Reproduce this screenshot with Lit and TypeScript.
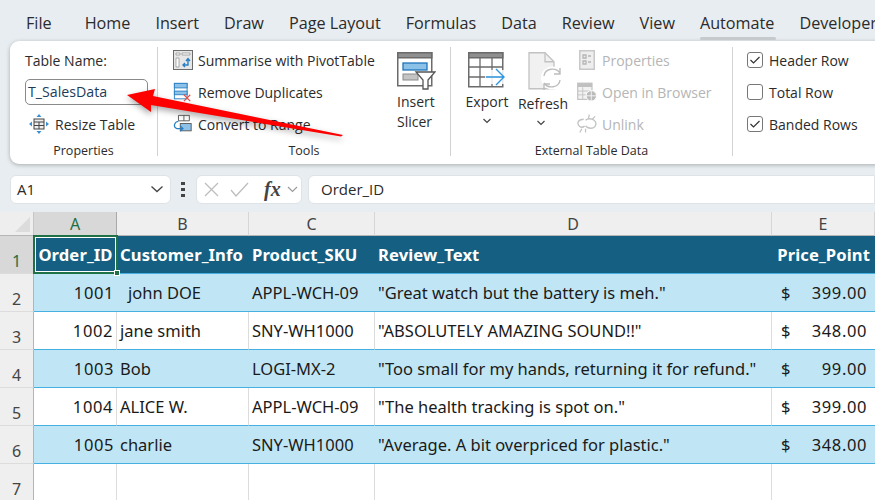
import { LitElement, html, css, svg } from "lit";
import { customElement } from "lit/decorators.js";

const tabs = ["Home", "Insert", "Draw", "Page Layout", "Formulas", "Data", "Review", "View", "Automate", "Developer"];

const rows = [
  { id: "1001", name: "john DOE", sku: "APPL-WCH-09", review: '"Great watch but the battery is meh."', price: "399.00", pad: true },
  { id: "1002", name: "jane smith", sku: "SNY-WH1000", review: '"ABSOLUTELY AMAZING SOUND!!"', price: "348.00" },
  { id: "1003", name: "Bob", sku: "LOGI-MX-2", review: '"Too small for my hands, returning it for refund."', price: "99.00" },
  { id: "1004", name: "ALICE W.", sku: "APPL-WCH-09", review: '"The health tracking is spot on."', price: "399.00" },
  { id: "1005", name: "charlie", sku: "SNY-WH1000", review: '"Average. A bit overpriced for plastic."', price: "348.00" },
];

const icon = (w: number, h: number, body: unknown) =>
  html`<svg width=${w} height=${h} viewBox="0 0 ${w} ${h}" fill="none">${body}</svg>`;

const pivotIcon = icon(20, 20, svg`
  <rect x=".5" y=".5" width="19" height="19" fill="#e6e6e6" stroke="#6b6b6b"/>
  <path d="M3 3h4v2H3zM9 3h8v2H9zM3 8h3v9H3z" fill="#fff" stroke="#8a8a8a" stroke-width=".7"/>
  <path d="M10 15h5v-6M13 11l2-2.500 2 2.500M12 13l-2 2 2 2" stroke="#2a7fc4" stroke-width="1.400"/>`);
const dupIcon = icon(22, 22, svg`
  <rect x="1.500" y="1.500" width="14" height="17" fill="#fff" stroke="#2a7fc4"/>
  <rect x="1.500" y="1.500" width="14" height="5" fill="#8cc1e8" stroke="#2a7fc4"/>
  <rect x="1.500" y="10" width="14" height="4" fill="#8cc1e8" stroke="#2a7fc4"/>
  <path d="M12 14l7 7M19 14l-7 7" stroke="#e0524c" stroke-width="1.300"/>`);
const convertIcon = icon(22, 22, svg`
  <path d="M6 1.500h12v6H6zM12 1.500v6" fill="#fff" stroke="#555"/>
  <rect x="8" y="10.500" width="12" height="8" fill="#8cc1e8" stroke="#555"/>
  <path d="M6 8C1 9 0 14 4 16h7M8 13l3 3-3 3" stroke="#2a7fc4" stroke-width="1.300"/>`);
const resizeIcon = icon(20, 20, svg`
  <rect x="5" y="5" width="10" height="10" fill="#eee" stroke="#444"/>
  <path d="M5 8h10M5 11.500h10M10 8v7" stroke="#444"/>
  <path d="M10 0l2.500 3h-5zM10 20l2.500-3h-5zM0 10l3-2.500v5zM20 10l-3-2.500v5z" fill="#3d8fcf"/>`);
const slicerIcon = icon(39, 38, svg`
  <rect x=".75" y=".75" width="34" height="33" fill="#fff" stroke="#6b6b6b" stroke-width="1.500"/>
  <rect x=".75" y=".75" width="34" height="5" fill="#8f8f8f" stroke="#6b6b6b" stroke-width="1.500"/>
  <rect x="6" y="11" width="24" height="7" fill="#8cc1e8" stroke="#1f75bb" stroke-width="1.300"/>
  <rect x="6" y="22" width="15" height="6" fill="#c4c4c4" stroke="#8a8a8a"/>
  <path d="M19 20h19l-7 8v9h-5v-9z" fill="#fff" stroke="#555" stroke-width="1.300"/>`);
const exportIcon = icon(38, 37, svg`
  <rect x=".75" y=".75" width="34" height="34" fill="#fff" stroke="#6b6b6b" stroke-width="1.500"/>
  <rect x=".75" y=".75" width="34" height="5" fill="#8f8f8f" stroke="#6b6b6b" stroke-width="1.500"/>
  <path d="M12 6v28M24 6v28M1 15h34M1 25h34" stroke="#6b6b6b" stroke-width="1.300"/>
  <rect x="17" y="18" width="20" height="14" fill="#fff" opacity=".85"/>
  <path d="M18 25h18M28 17l8 8-8 8" stroke="#2d95de" stroke-width="1.400"/>`);
const refreshIcon = icon(36, 38, svg`
  <path d="M1 .75h16l9 9v27H1z" fill="#f1f1f1" stroke="#c2c2c2" stroke-width="1.300"/>
  <path d="M17 .75v9h9" stroke="#c2c2c2" stroke-width="1.300"/>
  <circle cx="24.500" cy="26" r="11.500" fill="#fff"/>
  <path d="M16 24c1-8 12-9 16-3M32 28c-1 8-12 9-16 3M32 16v6h-6M16 38v-6h6" stroke="#bdbdbd" stroke-width="1.400"/>`);
const propsIcon = icon(16, 20, svg`
  <rect x=".75" y=".75" width="14.500" height="18.500" fill="#eee" stroke="#c8c8c8" stroke-width="1.500"/>
  <path d="M4 5h3v3H4zM4 11h3v3H4zM9 6h3M9 12h3" stroke="#b5b5b5" stroke-width="1.300"/>`);
const browserIcon = icon(21, 20, svg`
  <rect x=".75" y=".75" width="15" height="17" fill="#f2f2f2" stroke="#c4c4c4" stroke-width="1.300"/>
  <rect x=".75" y=".75" width="15" height="4" fill="#c0c0c0"/>
  <path d="M1 9h15M1 13h10M6 5v13" stroke="#c4c4c4"/>
  <circle cx="15" cy="14" r="5.500" fill="#bbb" stroke="#fff"/>
  <path d="M9.500 14h11M15 8.500v11" stroke="#fff" stroke-width=".8"/>`);
const unlinkIcon = icon(21, 20, svg`
  <path d="M7 5c-5 0-7 3-5.500 6S6 14 8 12M9 6c2-2 6-2 9 0s2 7-1 8-6 0-8-2" stroke="#c2c2c2" stroke-width="1.400"/>
  <path d="M12 4l1-4M16 5l3-3M5 15l-2 4M9 15v4" stroke="#c2c2c2" stroke-width="1.300"/>`);
const chevron = icon(10, 6, svg`<path d="M1.500 1l3.500 3.500L8.500 1" stroke="#444" stroke-width="1.200"/>`);
const check = icon(16, 16, svg`<path d="M3.500 8l3 3 6-6" stroke="#333" stroke-width="1.200"/>`);

@customElement("app-root")
export class AppRoot extends LitElement {
  static styles = css`
    :host {
      display: block;
      width: 875px;
      height: 500px;
      position: relative;
      overflow: hidden;
      background: #e8edf1;
      font-family: "Open Sans", "Noto Sans", sans-serif;
      color: #2b2b2b;
    }
    .tabs {
      display: flex;
      height: 41px;
      padding: 12px 0 0 26px;
      box-sizing: border-box;
      font-size: 16.2px;
      line-height: 22px;
      white-space: nowrap;
    }
    .tab {
      margin-right: 25px;
      position: relative;
    }
    .tab.file {
      margin-right: 33px;
    }
    .tab.active::after {
      content: "";
      position: absolute;
      left: 0;
      right: -2px;
      top: 25px;
      height: 3px;
      border-radius: 2px;
      background: #c6cacd;
    }
    .ribbon {
      display: flex;
      height: 123px;
      margin-left: 10px;
      width: 880px;
      background: #fff;
      border-radius: 9px 0 0 9px;
      box-shadow: 0 1px 4px rgba(0, 0, 0, 0.28);
      font-size: 14px;
    }
    .group {
      display: flex;
      flex-direction: column;
      position: relative;
      flex: none;
      border-right: 1px solid #d2d2d2;
      margin: 6px 0 8px;
      box-sizing: border-box;
    }
    .group.props { width: 148px; }
    .group.tools { width: 293px; }
    .group.ext { width: 282px; }
    .group.opts { border: none; flex: 1; }
    .body {
      flex: none;
      height: 96px;
      margin-top: -3px;
      display: flex;
    }
    .label {
      flex: none;
      text-align: center;
      font-size: 12.5px;
      line-height: 10px;
      height: 10px;
      margin-top: 6px;
    }
    .col {
      display: flex;
      flex-direction: column;
    }
    .row {
      display: flex;
      align-items: center;
      height: 32px;
      flex: none;
      white-space: nowrap;
    }
    .props .col { padding-left: 15px; }
    .name {
      width: 123px;
      height: 26px;
      flex: none;
      margin: 3px 0;
      box-sizing: border-box;
      border: 1px solid #8a8a8a;
      border-radius: 5px;
      padding-left: 2px;
      line-height: 23px;
      font-size: 14.2px;
      color: #1c3c5c;
    }
    .resize { padding-left: 4px; gap: 6px; }
    .tools .col { padding-left: 15px; width: 239px; box-sizing: border-box; }
    .tools .row { gap: 5px; }
    .tools .ico { width: 20px; display: flex; }
    .big {
      display: flex;
      flex-direction: column;
      align-items: center;
      text-align: center;
      line-height: 20px;
      padding-top: 8px;
    }
    .slicer { width: 39px; align-items: flex-start; }
    .slicer svg { margin-bottom: 2px; }
    .export { margin-left: 14px; width: 44px; }
    .export svg { margin-bottom: 3px; }
    .refresh { margin-left: 9px; width: 50px; }
    .refresh svg { margin-bottom: 4px; margin-left: 5px; }
    .chev { margin-top: 6px; line-height: 0; }
    .refresh .chev { margin-right: 4px; }
    .refresh .chev svg { margin: 0; }
    .muted { color: #b5b5b5; }
    .side { margin-left: 9px; }
    .side .row { gap: 5px; }
    .side .ico { width: 20px; display: flex; justify-content: center; }
    .opts .col { padding-left: 14px; margin-top: -3px; }
    .opts .row { gap: 6px; }
    .box {
      width: 16px;
      height: 16px;
      border: 1px solid #777;
      border-radius: 3px;
      box-sizing: border-box;
      display: flex;
      align-items: center;
      justify-content: center;
    }
    .box svg { flex: none; }
    .fbar {
      display: flex;
      align-items: center;
      height: 29px;
      margin-top: 11px;
      padding-left: 10px;
      font-size: 15px;
    }
    .fld {
      height: 29px;
      box-sizing: border-box;
      background: #fff;
      border: 1px solid #dfe3e6;
      border-radius: 6px;
      display: flex;
      align-items: center;
    }
    .cellname { width: 161px; padding: 0 6px 1px; justify-content: space-between; }
    .dots {
      width: 4px;
      margin: 0 11px 0 10px;
      display: flex;
      flex-direction: column;
      gap: 2.500px;
    }
    .dots i { display: block; width: 3.500px; height: 3.500px; background: #444; }
    .fx { width: 106px; padding-left: 7px; gap: 11px; }
    .fx b {
      font: italic 700 20px "Liberation Serif", serif;
      color: #444;
      margin: 0 -5px 0 4px;
    }
    .formula { flex: 1; margin-left: 6px; padding: 0 0 1px 12px; border-radius: 6px 0 0 6px; }
    .grid {
      display: grid;
      grid-template-columns: 34px 83px 132px 126px 397px 103px;
      grid-template-rows: 24px 38px 38px 38px 38px 38px 38px 38px;
      margin-top: 8px;
      background: #fff;
      font-family: "Noto Sans", sans-serif;
      font-size: 16.5px;
      color: #1a1a1a;
    }
    .corner {
      background: #eeeeee;
      border-right: 1px solid #c6c6c6;
      border-bottom: 1px solid #b5b5b5;
      box-sizing: border-box;
      position: relative;
    }
    .corner::after {
      content: "";
      position: absolute;
      right: 3px;
      bottom: 3px;
      border-style: solid;
      border-width: 0 0 15px 15px;
      border-color: transparent transparent #dcdcdc transparent;
    }
    .colh {
      background: #efefef;
      border-right: 1px solid #d6d6d6;
      box-sizing: border-box;
      text-align: center;
      font-size: 16px;
      line-height: 24px;
      color: #444;
      border-bottom: 1px solid #b5b5b5;
    }
    .colh.sel { background: #d8d8d8; color: #1f6f43; border-right-color: #a9a9a9; }
    .rowh {
      background: #efefef;
      border-right: 1px solid #b5b5b5;
      border-bottom: 1px solid #dcdcdc;
      box-sizing: border-box;
      display: flex;
      align-items: flex-end;
      justify-content: center;
      font-size: 16px;
      line-height: 24px;
      color: #444;
    }
    .rowh.sel { background: #d8d8d8; color: #1f6f43; }
    .cell {
      box-sizing: border-box;
      padding: 0 3px;
      display: flex;
      align-items: center;
      white-space: nowrap;
      border-right: 1px solid #dcdcdc;
      border-bottom: 1px solid #dcdcdc;
    }
    .cell.num { justify-content: flex-end; padding-right: 3px; letter-spacing: 0.6px; }
    .cell.lead { padding-left: 11px; }
    .cell.head {
      background: #156082;
      color: #fff;
      font-weight: 700;
      font-size: 16.6px;
      letter-spacing: 0.1px;
      border: none;
      border-bottom: 1px solid #45b0e1;
    }
    .cell.head.right { justify-content: flex-end; padding-right: 5px; }
    .cell.white { background: #fff; border-bottom: 1px solid #45b0e1; }
    .cell.band { background: #c0e6f5; border-right: none; border-bottom: 1px solid #45b0e1; }
    .cell.price { justify-content: space-between; padding: 0 8px 0 9px; border-right: none; letter-spacing: 0.6px; }
    .cell.a1 { position: relative; overflow: visible; justify-content: center; padding: 0; }
    .a1::before {
      content: "";
      position: absolute;
      inset: -1px -1px -1px -1px;
      border: 2px solid #1f7246;
      box-shadow: inset 0 0 0 1px #fff;
    }
    .a1::after {
      content: "";
      position: absolute;
      right: -3px;
      bottom: -3px;
      width: 6px;
      height: 6px;
      background: #1f7246;
      border: 1px solid #fff;
      box-sizing: border-box;
      z-index: 1;
    }
    .arrow {
      position: absolute;
      left: 0;
      top: 0;
      pointer-events: none;
      filter: drop-shadow(0 3px 3px rgba(0, 0, 0, 0.35));
    }
  `;

  renderRow(r: (typeof rows)[number], i: number) {
    const kind = i % 2 == 0 ? "band" : "white";
    return html`
      <div class="rowh">${i + 2}</div>
      <div class="cell num ${kind}">${r.id}</div>
      <div class="cell ${kind} ${r.pad ? "lead" : ""}">${r.name}</div>
      <div class="cell ${kind}">${r.sku}</div>
      <div class="cell ${kind}">${r.review}</div>
      <div class="cell price ${kind}"><span>$</span><span>${r.price}</span></div>
    `;
  }

  render() {
    return html`
      <div class="tabs">
        <span class="tab file">File</span>
        ${tabs.map((t) => html`<span class="tab ${t == "Automate" ? "active" : ""}">${t}</span>`)}
      </div>

      <div class="ribbon">
        <div class="group props">
          <div class="body">
            <div class="col">
              <div class="row">Table Name:</div>
              <div class="name">T_SalesData</div>
              <div class="row resize">${resizeIcon}<span>Resize Table</span></div>
            </div>
          </div>
          <div class="label">Properties</div>
        </div>

        <div class="group tools">
          <div class="body">
            <div class="col">
              <div class="row"><span class="ico">${pivotIcon}</span>Summarise with PivotTable</div>
              <div class="row"><span class="ico">${dupIcon}</span>Remove Duplicates</div>
              <div class="row"><span class="ico">${convertIcon}</span>Convert to Range</div>
            </div>
            <div class="big slicer">${slicerIcon}<span>Insert</span><span>Slicer</span></div>
          </div>
          <div class="label">Tools</div>
        </div>

        <div class="group ext">
          <div class="body">
            <div class="big export">${exportIcon}<span>Export</span><span class="chev">${chevron}</span></div>
            <div class="big refresh">${refreshIcon}<span>Refresh</span><span class="chev">${chevron}</span></div>
            <div class="col side muted">
              <div class="row"><span class="ico">${propsIcon}</span>Properties</div>
              <div class="row"><span class="ico">${browserIcon}</span>Open in Browser</div>
              <div class="row"><span class="ico">${unlinkIcon}</span>Unlink</div>
            </div>
          </div>
          <div class="label">External Table Data</div>
        </div>

        <div class="group opts">
          <div class="col">
            <div class="row"><span class="box">${check}</span>Header Row</div>
            <div class="row"><span class="box"></span>Total Row</div>
            <div class="row"><span class="box">${check}</span>Banded Rows</div>
          </div>
        </div>
      </div>

      <div class="fbar">
        <div class="fld cellname"><span>A1</span>${icon(14, 8, svg`<path d="M1.500 1.500l5.500 5 5.500-5" stroke="#444" stroke-width="1.300"/>`)}</div>
        <div class="dots"><i></i><i></i><i></i></div>
        <div class="fld fx">
          ${icon(15, 15, svg`<path d="M1 1l13 13M14 1L1 14" stroke="#bdbdbd" stroke-width="1.300"/>`)}
          ${icon(19, 15, svg`<path d="M1 8l5 6L18 1" stroke="#bdbdbd" stroke-width="1.300"/>`)}
          <b>fx</b>
          ${icon(11, 7, svg`<path d="M1 1l4.500 4.500L10 1" stroke="#999" stroke-width="1.100"/>`)}
        </div>
        <div class="fld formula">Order_ID</div>
      </div>

      <div class="grid">
        <div class="corner"></div>
        <div class="colh sel">A</div>
        <div class="colh">B</div>
        <div class="colh">C</div>
        <div class="colh">D</div>
        <div class="colh">E</div>

        <div class="rowh sel">1</div>
        <div class="cell head a1">Order_ID</div>
        <div class="cell head">Customer_Info</div>
        <div class="cell head">Product_SKU</div>
        <div class="cell head">Review_Text</div>
        <div class="cell head right">Price_Point</div>

        ${rows.map((r, i) => this.renderRow(r, i))}

        <div class="rowh">7</div>
        <div class="cell"></div>
        <div class="cell"></div>
        <div class="cell"></div>
        <div class="cell"></div>
        <div class="cell" style="border-right:none"></div>
      </div>

      <svg class="arrow" width="875" height="500">
        <polygon points="127,95 155,89 153,96 343,135 341,136.500 151,105 151,112" fill="#ff0000"/>
      </svg>
    `;
  }
}
